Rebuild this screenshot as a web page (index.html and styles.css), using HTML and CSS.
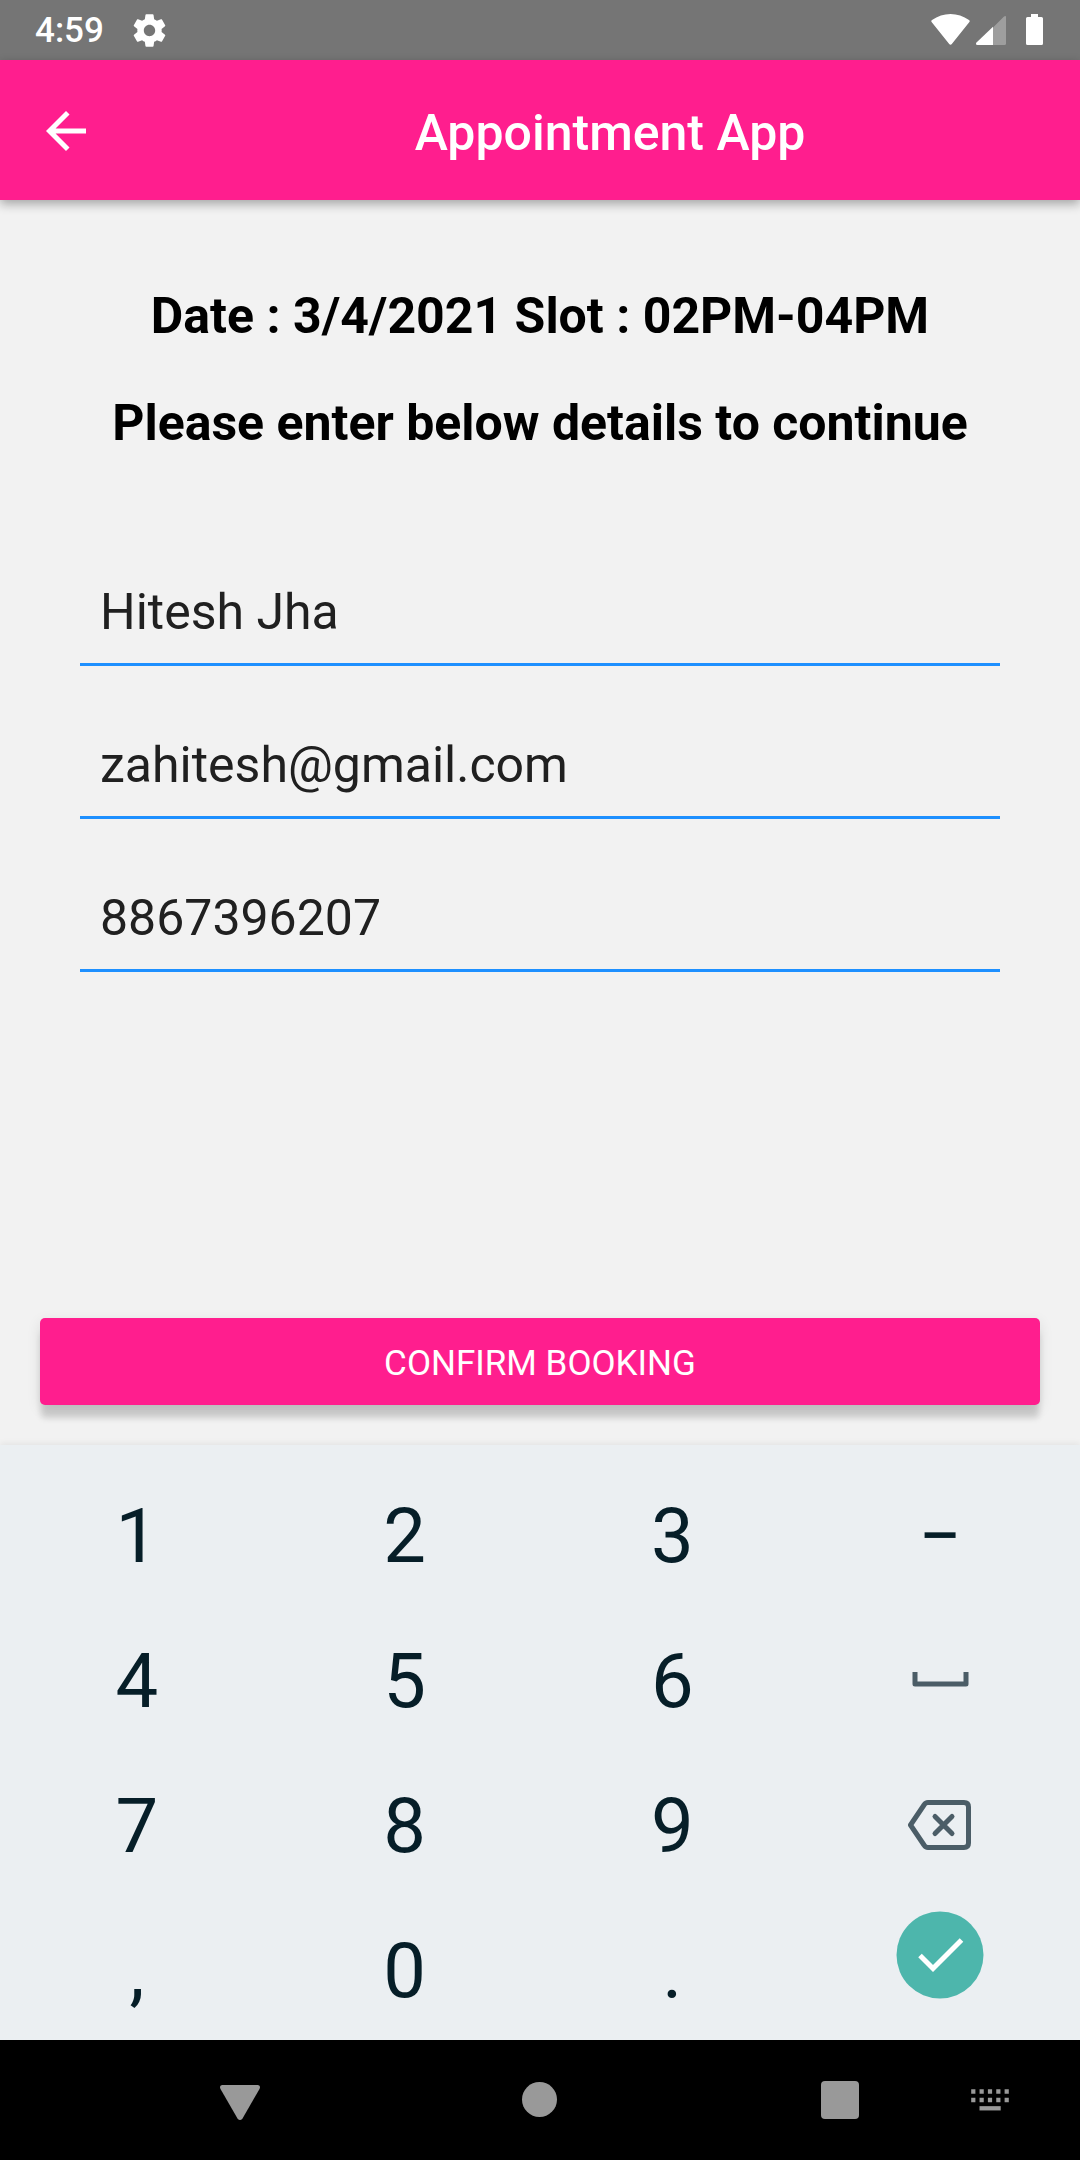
FILE: index.html
```html
<!DOCTYPE html>
<html lang="en">
<head>
<meta charset="utf-8">
<meta name="viewport" content="width=device-width, initial-scale=1">
<title>Appointment App</title>
<link rel="stylesheet" href="styles.css">
</head>
<body>
<div class="status-bar">
  <span class="clock">4:59</span>
  <svg class="gear" viewBox="0 0 24 24" fill="currentColor" aria-hidden="true"><path d="M19.43 12.98c.04-.32.07-.64.07-.98s-.03-.66-.07-.98l2.11-1.65c.19-.15.24-.42.12-.64l-2-3.46c-.12-.22-.39-.3-.61-.22l-2.49 1c-.52-.4-1.08-.73-1.69-.98l-.38-2.65C14.46 2.18 14.25 2 14 2h-4c-.25 0-.46.18-.49.42l-.38 2.65c-.61.25-1.17.59-1.69.98l-2.49-1c-.23-.09-.49 0-.61.22l-2 3.46c-.13.22-.07.49.12.64l2.11 1.65c-.04.32-.07.65-.07.98s.03.66.07.98l-2.11 1.65c-.19.15-.24.42-.12.64l2 3.46c.12.22.39.3.61.22l2.49-1c.52.4 1.08.73 1.69.98l.38 2.65c.03.24.24.42.49.42h4c.25 0 .46-.18.49-.42l.38-2.65c.61-.25 1.17-.59 1.69-.98l2.49 1c.23.09.49 0 .61-.22l2-3.46c.12-.22.07-.49-.12-.64l-2.11-1.65zM12 15.5c-1.93 0-3.5-1.57-3.5-3.5s1.57-3.5 3.5-3.5 3.5 1.57 3.5 3.5-1.57 3.5-3.5 3.5z"/></svg>
  <svg class="signals" viewBox="0 0 112 32" fill="currentColor" aria-hidden="true">
    <path d="M.8 8.2Q-.3 7 1 6Q9.500 0 19.500 0T38 6Q39.300 7 38.200 8.200L21 29.800Q19.500 31.600 18 29.800Z"/>
    <path d="M73 2.600Q75 1 75 3V29.500Q75 31 73.500 31H62V13.500Z" opacity=".3"/>
    <path d="M62 12.700V31H46.500Q44 30.500 45.500 28.500Z"/>
    <path d="M100 0h7v3h3.500q1.500 0 1.500 1.500v25q0 1.500-1.500 1.500h-14q-1.500 0-1.500-1.500v-25q0-1.500 1.500-1.500h3.500z"/>
  </svg>
</div>
<header class="app-bar">
  <button class="back" type="button" aria-label="Back">
    <svg viewBox="0 0 24 24" fill="currentColor"><path d="M20 11H7.830l5.590-5.590L12 4l-8 8 8 8 1.410-1.410L7.830 13H20v-2z"/></svg>
  </button>
  <h1 class="title">Appointment App</h1>
</header>
<main class="content">
  <h2 class="heading">Date : 3/4/2021 Slot : 02PM-04PM</h2>
  <h2 class="heading">Please enter below details to continue</h2>
  <form class="booking" id="booking">
    <input class="field" type="text" aria-label="Name" value="Hitesh Jha">
    <input class="field" type="email" aria-label="Email" value="zahitesh@gmail.com">
    <input class="field" type="tel" aria-label="Phone number" value="8867396207">
  </form>
  <button class="confirm" type="submit" form="booking">CONFIRM BOOKING</button>
</main>
<section class="keyboard" aria-label="Number keyboard">
  <button class="key" type="button">1</button>
  <button class="key" type="button">2</button>
  <button class="key" type="button">3</button>
  <button class="key" type="button">−</button>
  <button class="key" type="button">4</button>
  <button class="key" type="button">5</button>
  <button class="key" type="button">6</button>
  <button class="key key-icon" type="button" aria-label="Space">
    <svg width="64" height="50" viewBox="0 0 64 50" fill="none" stroke="currentColor" stroke-width="5" stroke-linejoin="round"><path d="M7 17v12h51V17"/></svg>
  </button>
  <button class="key" type="button">7</button>
  <button class="key" type="button">8</button>
  <button class="key" type="button">9</button>
  <button class="key key-icon" type="button" aria-label="Delete">
    <svg width="64" height="50" viewBox="0 0 64 50" fill="none" stroke="currentColor" stroke-width="5" stroke-linejoin="round"><path d="M20 2.500H56Q60.500 2.500 60.500 7V43Q60.500 47.500 56 47.500H20Q17.500 47.500 16 45L2.500 25L16 5Q17.500 2.500 20 2.500Z"/><path d="M27 16.500L44 33.500M44 16.500L27 33.500" stroke-linecap="round"/></svg>
  </button>
  <button class="key" type="button">,</button>
  <button class="key" type="button">0</button>
  <button class="key" type="button">.</button>
  <button class="key key-done" type="button" aria-label="Done">
    <svg width="88" height="88" viewBox="0 0 88 88" fill="none"><circle cx="44" cy="44" r="43.500" fill="#4db6ac"/><path d="M24 44.500L37 57.500L65.500 29" stroke="#fff" stroke-width="5"/></svg>
  </button>
</section>
<nav class="nav-bar" aria-label="System navigation">
  <button class="nav-button nav-back" type="button" aria-label="Hide keyboard">
    <svg width="40" height="40" viewBox="0 0 40 40" fill="currentColor"><path d="M2 5H38Q41 5.500 39.500 9L22.500 38.500Q20 41.500 17.500 38.500L.5 9Q-1 5.500 2 5Z"/></svg>
  </button>
  <button class="nav-button nav-home" type="button" aria-label="Home">
    <svg width="40" height="40" viewBox="0 0 40 40" fill="currentColor"><circle cx="19.500" cy="19.500" r="17.500"/></svg>
  </button>
  <button class="nav-button nav-recent" type="button" aria-label="Recent apps">
    <svg width="40" height="40" viewBox="0 0 40 40" fill="currentColor"><rect x="1" y="1" width="38" height="38" rx="4"/></svg>
  </button>
  <button class="nav-button nav-input" type="button" aria-label="Choose keyboard">
    <svg width="40" height="40" viewBox="0 0 40 40" fill="none" stroke="currentColor" stroke-width="4.300"><path d="M1.200 11.500H38.800M1.200 20H38.800" stroke-dasharray="4.200 4.150"/><path d="M9.500 28.300H30.700"/></svg>
  </button>
</nav>
</body>
</html>
```
FILE: styles.css
```css
* {
  box-sizing: border-box;
}

body {
  margin: 0;
  min-height: 100vh;
  display: flex;
  flex-direction: column;
  background: #f2f2f2;
  font-family: Roboto, "Liberation Sans", sans-serif;
}

button {
  margin: 0;
  padding: 0;
  border: 0;
  background: none;
  color: inherit;
  font: inherit;
}

svg {
  display: block;
}

.status-bar {
  height: 60px;
  padding: 0 37px 0 35px;
  display: flex;
  align-items: center;
  background: #757575;
  color: #fff;
}

.clock {
  padding-top: 2px;
  font-size: 35px;
  font-weight: 500;
  line-height: 58px;
}

.gear {
  width: 39px;
  height: 39px;
  margin-left: 26px;
}

.signals {
  width: 112px;
  height: 32px;
  margin-left: auto;
}

.app-bar {
  height: 140px;
  padding-left: 36px;
  display: flex;
  align-items: center;
  background: #ff1e8e;
  color: #fff;
  box-shadow: 0 4px 10px rgba(0, 0, 0, 0.32);
}

.back {
  width: 60px;
  margin-right: 44px;
  padding-top: 2px;
}

.title {
  flex: 1;
  margin: 0;
  padding-top: 6px;
  font-size: 50px;
  font-weight: 500;
  line-height: 60px;
  text-align: center;
}

.content {
  flex: 1;
  padding: 86px 40px 40px;
  display: flex;
  flex-direction: column;
}

.heading {
  margin: 0 0 47px;
  color: #000;
  font-size: 50px;
  font-weight: 700;
  line-height: 60px;
  text-align: center;
}

.booking {
  padding: 61px 40px 48px;
  display: flex;
  flex-direction: column;
  gap: 48px;
}

.field {
  width: 100%;
  height: 105px;
  padding: 0 20px;
  border: 0;
  border-bottom: 3px solid #1e90ff;
  border-radius: 0;
  outline: 0;
  background: none;
  color: #202020;
  font-family: inherit;
  font-size: 50px;
}

.confirm {
  height: 87px;
  margin-top: auto;
  padding-top: 3px;
  border-radius: 5px;
  background: #ff1e8e;
  color: #fff;
  font-size: 35px;
  box-shadow: 0 14px 6px -1px rgba(0, 0, 0, 0.15), 0 4px 14px rgba(0, 0, 0, 0.1);
}

.keyboard {
  padding: 15px 6px 0 3px;
  display: grid;
  grid-template-columns: repeat(4, 1fr);
  grid-auto-rows: 145px;
  background: #ebeff2;
  box-shadow: 0 -2px 6px rgba(0, 0, 0, 0.06);
}

.key {
  display: flex;
  align-items: center;
  justify-content: center;
  padding-top: 6px;
  color: #061e28;
  font-size: 76px;
}

.key-icon {
  padding-top: 4px;
  color: #4b5d67;
}

.key-done {
  padding: 0 0 26px;
}

.nav-bar {
  height: 120px;
  display: grid;
  grid-template-columns: 11fr repeat(6, 10fr) 1fr;
  background: #000;
  color: #999;
}

.nav-button {
  display: flex;
  align-items: center;
  justify-content: center;
}

.nav-back {
  grid-column: 2;
}

.nav-home {
  grid-column: 4;
}

.nav-recent {
  grid-column: 6;
}

.nav-input {
  grid-column: 7;
}
```
